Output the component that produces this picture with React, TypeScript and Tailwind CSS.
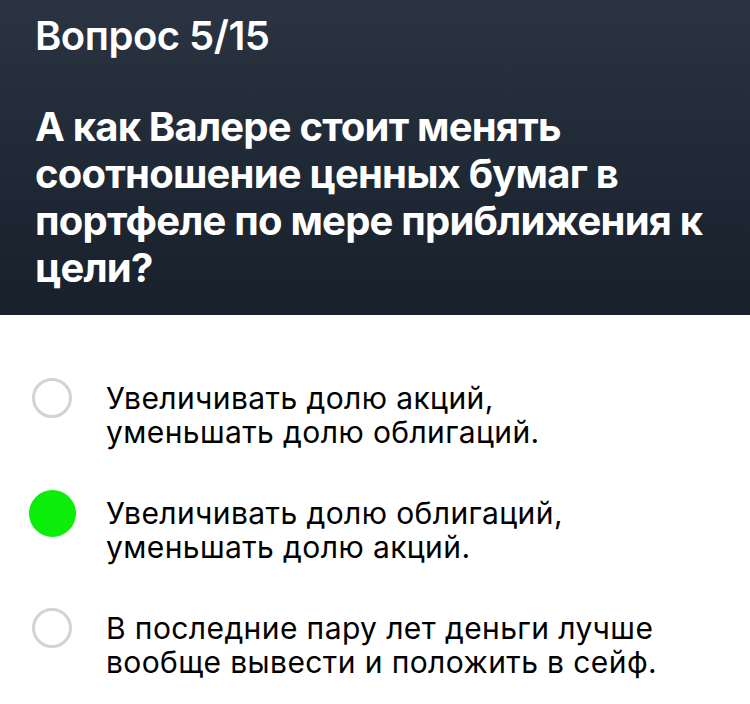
import React from "react";

const options = [
  { text: ["Увеличивать долю акций,", "уменьшать долю облигаций."], selected: false },
  { text: ["Увеличивать долю облигаций,", "уменьшать долю акций."], selected: true },
  { text: ["В последние пару лет деньги лучше", "вообще вывести и положить в сейф."], selected: false },
];

export default function App() {
  return (
    <div className="w-[750px] h-[704px] bg-white overflow-hidden" style={{ fontFamily: "Inter, 'Noto Sans', sans-serif" }}>
      <div className="h-[315px] bg-gradient-to-b from-[#2a3442] to-[#17202b] pl-[35px] pt-[12px]">
        <div className="text-white text-[40px] leading-[48px] font-semibold tracking-[-0.5px]">Вопрос 5/15</div>
        <div className="mt-[43px] text-white text-[40px] leading-[47px] font-bold tracking-[-0.8px]">
          А как Валере стоит менять
          <br />
          соотношение ценных бумаг в
          <br />
          портфеле по мере приближения к
          <br />
          цели?
        </div>
      </div>
      <div className="pt-[66px] flex flex-col gap-[47px]">
        {options.map((o, i) => (
          <div key={i} className="flex items-start">
            <div className="w-[106px] h-[34px] flex items-center justify-center pr-[2px] shrink-0">
              {o.selected ? (
                <div className="w-[47px] h-[47px] shrink-0 rounded-full bg-[#0aee0a]" />
              ) : (
                <div className="w-[40px] h-[40px] shrink-0 rounded-full border-[3px] border-[#d3d3d3]" />
              )}
            </div>
            <div className="text-[30px] leading-[34px] text-black tracking-[0.4px]">
              {o.text[0]}
              <br />
              {o.text[1]}
            </div>
          </div>
        ))}
      </div>
    </div>
  );
}
